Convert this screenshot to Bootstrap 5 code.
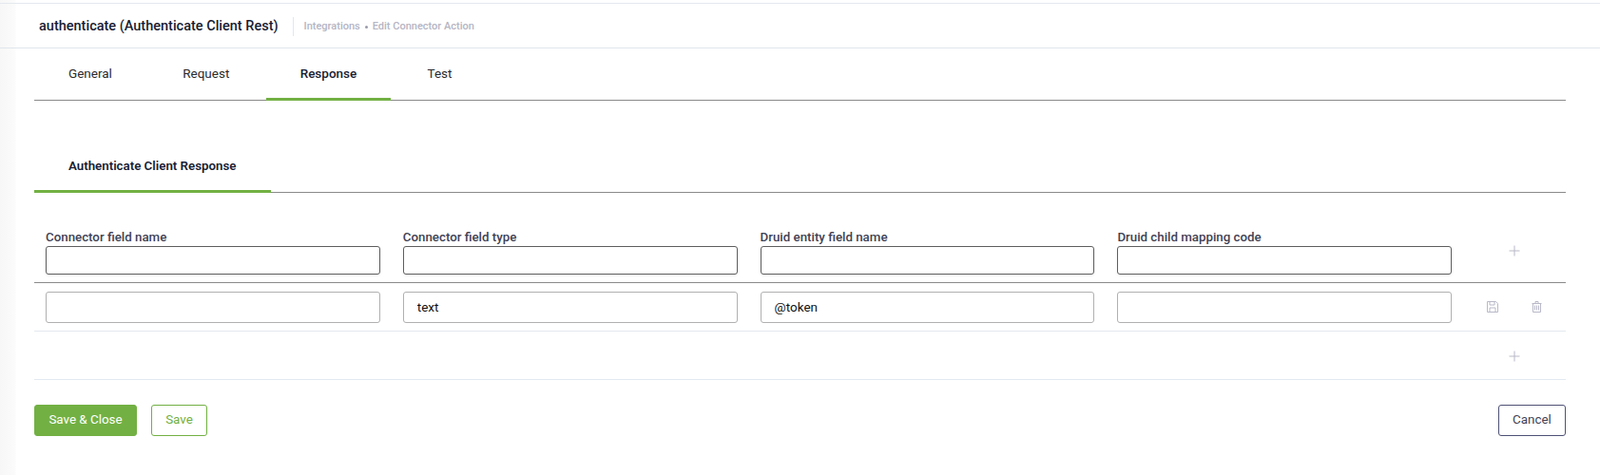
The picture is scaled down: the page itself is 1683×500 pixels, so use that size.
<!doctype html>
<html lang="en"><head><meta charset="utf-8"><title>Edit Connector Action</title>
<link href="https://cdn.jsdelivr.net/npm/bootstrap@5.3.0/dist/css/bootstrap.min.css" rel="stylesheet">
<style>
html,body{height:500px;overflow:hidden}
body{font-family:Roboto,"Liberation Sans",sans-serif;font-size:13.4px;color:#181c32;background:linear-gradient(90deg,#f7f7f7 0,#fbfbfb 16px,#fff 17px)}
.top-hair{height:4px;border-bottom:1px solid #e4e9ef}
.page-head{height:47px;border-bottom:1px solid #e0e6ec;padding:1px 0 0 41px}
.page-title{font-size:14.5px;font-weight:500;color:#181c32;margin:0;line-height:20px}
.head-sep{width:1px;height:20px;background:#e4e6ef;margin:0 11px 0 15px}
.crumbs{font-size:11px;font-weight:500;color:#b5b5c3;gap:5px;padding-top:1px}
.crumb-dot{width:3px;height:3px;background:#9a9aad;border-radius:50%}
.main-wrap{margin:0 36px}
.tabs-line{border-bottom:1px solid #8a8a8a}
.tabs-main{height:55px}
.tab-link{display:block;height:55px;padding:0 36px;margin-right:2.300px;line-height:52px;color:#2b2b2b;font-size:13.5px}
.tab-on{font-weight:500;color:#181c32;box-shadow:inset 0 -3px 0 #72b043}
.tabs-sub{height:69px;margin-top:28px}
.tab-sub{display:block;width:249px;height:69px;padding:0 36px;line-height:81px;font-weight:600;font-size:13.3px;color:#181c32;box-shadow:inset 0 -3px 0 #72b043}
.grid-row{padding:0 12px;gap:24px}
.grid-cell{width:351.8px;flex:none}
.head-row{height:95px;border-bottom:1px solid #8a8a8a;padding-top:37px}
.field-label{display:block;font-size:13.3px;font-weight:500;line-height:19px;margin:0;color:#3f4254}
.form-control.ctl{height:30px;border:1px solid #5e5e5e;border-radius:3px;box-shadow:0 1px 3px rgba(0,0,0,.08);padding:0 14px}
.form-control.ctl2{height:33px;border:1px solid #b0b0b0;border-radius:3px;padding:0 14px;font-size:13.5px;color:#111;font-family:Roboto,"Liberation Sans",sans-serif}
.data-row{height:51px;border-bottom:1px solid #e3e9f0;align-items:center}
.add-row{height:51px;border-bottom:1px solid #e3e9f0;padding-top:2px}
.act-plus{flex:none;width:96px;height:30px;margin-top:9px;padding-left:36px}
.act-icons{flex:none;gap:35px;padding-left:13px}
.ico{display:block;fill:none;stroke:#b8b8c8;stroke-width:1}
.ico-end{margin-right:48px}
.foot-row{padding-top:26px}
.btn.go{background:#72b043;border:1px solid #72b043;color:#fff;font-size:13.4px;width:108px;height:33px;padding:0;border-radius:3px}
.btn.go-line{background:#fff;border:1px solid #72b043;color:#72b043;font-size:13.4px;width:59px;height:33px;padding:0;border-radius:3px;margin-left:15px}
.btn.stop{background:#fff;border:1px solid #4e5175;color:#3f4254;font-size:13.4px;width:71px;height:33px;padding:0;border-radius:3px}
</style></head>
<body>
<div class="top-hair"></div>
<header class="page-head d-flex align-items-center">
  <h1 class="page-title">authenticate (Authenticate Client Rest)</h1>
  <span class="head-sep"></span>
  <div class="crumbs d-flex align-items-center"><span>Integrations</span><span class="crumb-dot"></span><span>Edit Connector Action</span></div>
</header>
<main class="main-wrap">
  <nav class="tabs-line tabs-main d-flex">
    <a class="tab-link text-decoration-none" href="#">General</a>
    <a class="tab-link text-decoration-none" href="#">Request</a>
    <a class="tab-link tab-on text-decoration-none" href="#">Response</a>
    <a class="tab-link text-decoration-none" href="#">Test</a>
  </nav>
  <nav class="tabs-line tabs-sub d-flex"><a class="tab-sub text-decoration-none" href="#">Authenticate Client Response</a></nav>
  <div class="grid-row head-row d-flex">
    <div class="grid-cell"><label class="field-label">Connector field name</label><input class="form-control ctl"></div>
    <div class="grid-cell"><label class="field-label">Connector field type</label><input class="form-control ctl"></div>
    <div class="grid-cell"><label class="field-label">Druid entity field name</label><input class="form-control ctl"></div>
    <div class="grid-cell"><label class="field-label">Druid child mapping code</label><input class="form-control ctl"></div>
    <div class="act-plus d-flex align-items-center"><svg class="ico" width="12" height="12" viewBox="0 0 12 12"><path d="M6 .5v11M.5 6h11"/></svg></div>
  </div>
  <div class="grid-row data-row d-flex">
    <div class="grid-cell"><input class="form-control ctl2"></div>
    <div class="grid-cell"><input class="form-control ctl2" value="text"></div>
    <div class="grid-cell"><input class="form-control ctl2" value="@token"></div>
    <div class="grid-cell"><input class="form-control ctl2"></div>
    <div class="act-icons d-flex align-items-center">
      <svg class="ico" width="12" height="12" viewBox="0 0 12 12"><path d="M.5.5h9l2 2v9H.5zM3 .5v3.5h5V.5M3 11.5V7h6v4.500"/></svg>
      <svg class="ico" width="11" height="12" viewBox="0 0 11 12"><path d="M1.500 2.500h8v9h-8zM.5 2.500h10M4 2.500V.5h3v2M3.500 4.500v5M5.500 4.500v5M7.500 4.500v5"/></svg>
    </div>
  </div>
  <div class="add-row d-flex align-items-center"><svg class="ico ico-end ms-auto" width="12" height="12" viewBox="0 0 12 12"><path d="M6 .5v11M.5 6h11"/></svg></div>
  <div class="foot-row d-flex">
    <button class="btn go" type="button">Save &amp; Close</button>
    <button class="btn go-line" type="button">Save</button>
    <button class="btn stop ms-auto" type="button">Cancel</button>
  </div>
</main>
</body></html>
